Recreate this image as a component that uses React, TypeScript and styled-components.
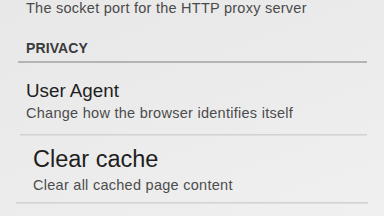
import React from "react";
import styled, { createGlobalStyle } from "styled-components";

const Global = createGlobalStyle`
  html, body {
    margin: 0;
    padding: 0;
    width: 384px;
    height: 216px;
    overflow: hidden;
    background: #ebebeb;
  }
  #root { height: 216px; }
`;

const Screen = styled.div`
  width: 384px;
  height: 216px;
  overflow: hidden;
  display: flex;
  flex-direction: column;
  background: linear-gradient(160deg, #e8e8e8 0%, #ebebeb 45%, #f0f0f0 100%);
  font-family: "Liberation Sans", Arial, sans-serif;
`;

const CutSummary = styled.div`
  padding-left: 26px;
  font-size: 14.5px;
  line-height: 16px;
  letter-spacing: 0.25px;
  color: #4a4a4a;
  white-space: nowrap;
`;

const SectionHeader = styled.div`
  margin: 24px 17px 0 18px;
  padding: 0 0 5px 8px;
  font-size: 14px;
  line-height: 16px;
  font-weight: bold;
  color: #3a3a3a;
  letter-spacing: 0.1px;
  border-bottom: 2px solid #b4b4b4;
`;

const Item = styled.div<{ $left: number; $right: number; $pad: number; $top: number; $bottom: number }>`
  display: flex;
  flex-direction: column;
  margin: 0 ${(p) => p.$right}px 0 ${(p) => p.$left}px;
  padding: ${(p) => p.$top}px 0 ${(p) => p.$bottom}px ${(p) => p.$pad}px;
  border-bottom: 1px solid #d2d2d2;
  box-shadow: 0 1px 0 #dedede;
`;

const Title = styled.div<{ $size: number; $lh: number }>`
  font-size: ${(p) => p.$size}px;
  line-height: ${(p) => p.$lh}px;
  color: #1e1e1e;
  white-space: nowrap;
`;

const Subtitle = styled.div<{ $gap: number }>`
  margin-top: ${(p) => p.$gap}px;
  font-size: 14.5px;
  line-height: 16px;
  letter-spacing: 0.27px;
  color: #4c4c4c;
  white-space: nowrap;
`;

export default function App() {
  return (
    <>
      <Global />
      <Screen>
        <CutSummary>The socket port for the HTTP proxy server</CutSummary>
        <SectionHeader>PRIVACY</SectionHeader>
        <Item $left={20} $right={17} $pad={6} $top={17} $bottom={13}>
          <Title $size={18.8} $lh={22}>User Agent</Title>
          <Subtitle $gap={3}>Change how the browser identifies itself</Subtitle>
        </Item>
        <Item $left={16} $right={16} $pad={17} $top={10} $bottom={9}>
          <Title $size={23.5} $lh={28}>Clear cache</Title>
          <Subtitle $gap={4}>Clear all cached page content</Subtitle>
        </Item>
      </Screen>
    </>
  );
}
